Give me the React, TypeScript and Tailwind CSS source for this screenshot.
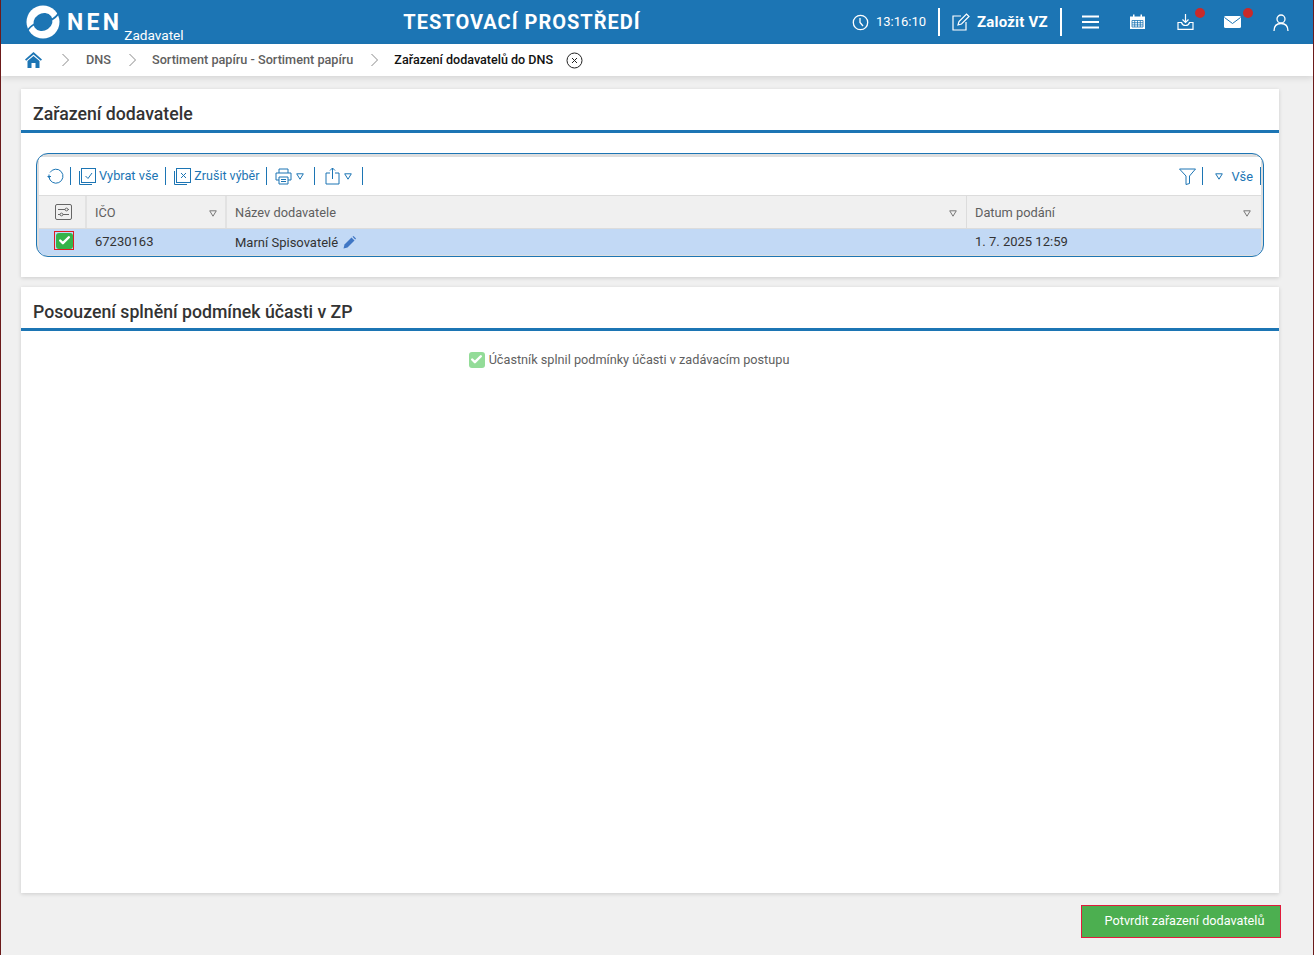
import React from "react";
import { Check } from "lucide-react";

const blue = "#1c75b4";

const Sep = () => <span className="block w-px h-[18px] bg-[#1c75b4] shrink-0" />;

const Tri = ({ color = blue }: { color?: string }) => (
  <svg width="8" height="7" viewBox="0 0 8 7" fill="none" className="shrink-0 block">
    <path d="M0.7 0.8H7.3L4 6.2Z" stroke={color} strokeWidth="1" strokeLinejoin="round" />
  </svg>
);

const Chevron = () => (
  <svg width="9" height="14" viewBox="0 0 9 14" fill="none" className="shrink-0 block">
    <path d="M1.5 1L7.5 7L1.5 13" stroke="#8a8a8a" strokeWidth="1" />
  </svg>
);

const Logo = () => (
  <svg width="34" height="34" viewBox="0 0 34 34" className="shrink-0">
    <circle cx="17" cy="17" r="16.5" fill="#fff" />
    <ellipse cx="17" cy="17" rx="10" ry="8.6" transform="rotate(-35 17 17)" fill={blue} />
    <path d="M25 15Q30 13 34 6" fill="none" stroke={blue} strokeWidth="1.8" />
    <path d="M9 19Q4 21 0 28" fill="none" stroke={blue} strokeWidth="1.8" />
  </svg>
);

const SelectIcon = ({ kind }: { kind: "check" | "x" }) => (
  <svg width="17" height="17" viewBox="0 0 17 17" fill="none" stroke={blue} strokeWidth="1" className="shrink-0 block">
    <path d="M0.5 3V16.5H13" />
    <rect x="2.5" y="0.5" width="14" height="14" />
    {kind === "check" ? <path d="M6.5 8L9 10.5L13 5" /> : <path d="M7 5L12 10M12 5L7 10" />}
  </svg>
);

const Panel = ({ title, className, children }: { title: string; className: string; children: React.ReactNode }) => (
  <section className={`bg-white shadow-[0_1px_4px_rgba(0,0,0,0.15)] ${className}`}>
    <h2 className="h-[44px] border-b-[3px] border-[#1c75b4] px-3 pt-[13px] text-[17.7px] leading-[24px] font-medium text-[#333]">
      {title}
    </h2>
    {children}
  </section>
);

export default function App() {
  return (
    <div
      className="w-[1314px] h-[955px] bg-[#f0f0f0] border-x border-[#6b1a1a] flex flex-col overflow-hidden text-[12.8px] text-[#5f5f5f]"
      style={{ fontFamily: "Roboto, sans-serif" }}
    >
      {/* top bar */}
      <header className="h-[44px] bg-[#1c75b4] flex items-center text-white shrink-0">
        <div className="w-[400px] flex items-center pl-[25px] shrink-0">
          <Logo />
          <span className="ml-[7px] text-[23px] font-bold tracking-[3.3px] leading-none">NEN</span>
          <span className="ml-[2px] mt-[28px] text-[13.6px] leading-none">Zadavatel</span>
        </div>
        <div className="w-[240px] text-center text-[20px] font-bold tracking-[1px] shrink-0 ml-[1px]">
          TESTOVACÍ PROSTŘEDÍ
        </div>
        <div className="flex items-center ml-[210px]">
          <svg width="17" height="17" viewBox="0 0 17 17" fill="none" stroke="#fff" strokeWidth="1.3">
            <circle cx="8.5" cy="8.5" r="7.2" />
            <path d="M8 4V8.5L11 12" />
          </svg>
          <span className="ml-[7px] w-[52px] text-[13px]">13:16:10</span>
          <span className="ml-[10px] w-[2px] h-[28px] bg-white" />
          <svg width="18" height="18" viewBox="0 0 18 18" fill="none" stroke="#fff" strokeWidth="1.2" className="ml-[12px]">
            <path d="M9 3H1V17H14V9" />
            <path d="M6 12L7 8.5L14.5 1L17 3.5L9.5 11Z" />
          </svg>
          <span className="ml-[7px] w-[83px] text-[15px] font-bold tracking-[0.2px]">Založit VZ</span>
          <span className="w-[2px] h-[28px] bg-white" />
          <svg width="17" height="14" viewBox="0 0 17 14" fill="#fff" className="ml-[20px]">
            <rect y="0.5" width="17" height="2" />
            <rect y="6" width="17" height="2" />
            <rect y="11.5" width="17" height="2" />
          </svg>
          <svg width="17" height="16" viewBox="0 0 17 16" className="ml-[30px]">
            <path d="M1 2.5H16V15H1Z" fill="#fff" />
            <rect x="4" y="0.5" width="1.5" height="3.5" fill="#fff" />
            <rect x="11.5" y="0.5" width="1.5" height="3.5" fill="#fff" />
            <path d="M3 6.5H14V13H3ZM5.7 6.5V13M8.5 6.5V13M11.3 6.5V13M3 8.7H14M3 10.9H14" fill="none" stroke={blue} strokeWidth="0.8" />
          </svg>
          <span className="relative ml-[31px] w-[17px] h-[16px]">
            <svg width="17" height="16" viewBox="0 0 17 16" fill="none" stroke="#fff" strokeWidth="1.2" className="block">
              <path d="M8.5 0V8M5.5 5.5L8.5 8.5L11.5 5.5" />
              <path d="M4.5 8.5H1V15.3H16V8.5H12.5C12 10.5 10.5 11.5 8.5 11.5C6.5 11.5 5 10.5 4.5 8.5Z" />
            </svg>
            <span className="absolute -top-[6px] left-[18px] w-[10px] h-[10px] rounded-full bg-[#c92a2a]" />
          </span>
          <span className="relative ml-[30px] w-[17px] h-[12px]">
            <svg width="17" height="12" viewBox="0 0 17 12" className="block">
              <rect width="17" height="12" rx="1.5" fill="#fff" />
              <path d="M0.5 1.5L8.5 7.5L16.5 1.5" fill="none" stroke={blue} strokeWidth="1" />
            </svg>
            <span className="absolute -top-[8px] left-[19px] w-[10px] h-[10px] rounded-full bg-[#c92a2a]" />
          </span>
          <svg width="16" height="17" viewBox="0 0 16 17" fill="none" stroke="#fff" strokeWidth="1.3" className="ml-[32px]">
            <circle cx="8" cy="5" r="4" />
            <path d="M1 17C1 12 4 9.5 8 9.5C12 9.5 15 12 15 17" />
          </svg>
        </div>
      </header>

      {/* breadcrumb */}
      <nav className="h-[32px] bg-white shadow-[0_2px_6px_rgba(0,0,0,0.12)] flex items-center pl-[24px] shrink-0 text-[12.7px] font-medium relative">
        <svg width="17" height="16" viewBox="0 0 17 16" fill={blue} className="shrink-0">
          <path d="M8.5 0L17 7.5L15.8 8.7L8.5 2.4L1.2 8.7L0 7.5Z" />
          <path d="M8.5 4L14.5 9V16H10.5V11H6.5V16H2.5V9Z" />
        </svg>
        <span className="ml-[19px]"><Chevron /></span>
        <span className="ml-[16px]">DNS</span>
        <span className="ml-[17px]"><Chevron /></span>
        <span className="ml-[15px]">Sortiment papíru - Sortiment papíru</span>
        <span className="ml-[17px]"><Chevron /></span>
        <span className="ml-[15px] text-[12.55px] text-[#111]">Zařazení dodavatelů do DNS</span>
        <svg width="17" height="17" viewBox="0 0 17 17" fill="none" stroke="#222" strokeWidth="1" className="ml-[13px]">
          <circle cx="8.5" cy="8.5" r="7.5" />
          <path d="M6 6L11 11M11 6L6 11" />
        </svg>
      </nav>

      <main className="flex-1 flex flex-col pl-[20px] pr-[34px] pt-[13px]">
        <Panel title="Zařazení dodavatele" className="h-[188px]">
          <div className="mx-[15px] mt-[20px] h-[104px] rounded-[12px] border border-[#1c75b4] overflow-hidden bg-[#dedede] pt-[3px] px-[2px] pb-[2px]">
            <div className="h-[38px] bg-white flex items-center pl-[8px] text-[#1c75b4]">
              <svg width="17" height="17" viewBox="0 0 17 17" fill="none" stroke={blue} strokeWidth="1" className="shrink-0">
                <path d="M3 4.5A7 7 0 1 1 2 9" />
                <path d="M0.5 8.5H4M2 6.5V10" />
              </svg>
              <span className="ml-[6px] mr-[8px]"><Sep /></span>
              <SelectIcon kind="check" />
              <span className="ml-[3px] mr-[7px]">Vybrat vše</span>
              <Sep />
              <span className="ml-[8px]"><SelectIcon kind="x" /></span>
              <span className="ml-[3px] mr-[7px] text-[12.5px]">Zrušit výběr</span>
              <Sep />
              <svg width="17" height="17" viewBox="0 0 17 17" fill="none" stroke={blue} strokeWidth="1" className="ml-[8px] shrink-0">
                <path d="M4 5V1H13V5M4 12H1V5H16V12H13" />
                <path d="M4 9H13V16H4ZM6 11.5H11M6 13.5H11" />
              </svg>
              <span className="ml-[4px] mr-[10px]"><Tri /></span>
              <Sep />
              <svg width="15" height="18" viewBox="0 0 15 18" fill="none" stroke={blue} strokeWidth="1" className="ml-[10px] shrink-0">
                <path d="M5 6H1V17H14V6H10M7.5 12V1M5 3.5L7.5 1L10 3.5" />
              </svg>
              <span className="ml-[4px] mr-[10px]"><Tri /></span>
              <Sep />
              <div className="ml-auto flex items-center">
                <svg width="17" height="17" viewBox="0 0 17 17" fill="none" stroke={blue} strokeWidth="1" className="shrink-0">
                  <path d="M0.5 1H16.5L10.5 8V15.5L7 16.5V8Z" />
                </svg>
                <span className="ml-[6px]"><Sep /></span>
                <span className="ml-[12px]"><Tri /></span>
                <span className="ml-[8px] mt-[1px]">Vše</span>
                <span className="ml-[7px]"><Sep /></span>
              </div>
            </div>
            <div className="h-[34px] bg-[#f0f0f0] border-y border-[#dcdcdc] flex items-center">
              <div className="w-[48px] h-full flex items-center justify-center border-r-2 border-[#e2e2e2] pl-[3px]">
                <svg width="17" height="16" viewBox="0 0 17 16" fill="none" stroke="#666" strokeWidth="1">
                  <rect x="0.5" y="0.5" width="16" height="15" rx="1.5" />
                  <path d="M3 5.5H10M13 5.5H14M3 10.5H5M8 10.5H14" />
                  <circle cx="11.5" cy="5.5" r="1.4" />
                  <circle cx="6.5" cy="10.5" r="1.4" />
                </svg>
              </div>
              <div className="w-[140px] h-full flex items-center justify-between pl-[8px] pr-[8px] pt-[2px] border-r-2 border-[#e2e2e2]">
                <span>IČO</span>
                <Tri color="#777" />
              </div>
              <div className="w-[740px] h-full flex items-center justify-between pl-[8px] pr-[9px] pt-[2px] border-r border-[#dcdcdc]">
                <span>Název dodavatele</span>
                <Tri color="#777" />
              </div>
              <div className="flex-1 h-full flex items-center justify-between pl-[8px] pr-[10px] pt-[2px]">
                <span>Datum podání</span>
                <Tri color="#777" />
              </div>
            </div>
            <div className="h-[26px] bg-[#c2d9f5] flex items-center text-[13px] text-[#333]">
              <div className="w-[48px] flex justify-center pb-[3px] pl-[2px]">
                <span className="w-[20px] h-[19px] border border-[#e01b24] flex items-center justify-center">
                  <span className="w-[17px] h-[16px] rounded-[3px] bg-[#35b34a] flex items-center justify-center">
                    <Check size={13} strokeWidth={4.5} color="#fff" />
                  </span>
                </span>
              </div>
              <div className="w-[140px] pl-[8px]">67230163</div>
              <div className="w-[740px] pl-[8px] flex items-center">
                <span className="mt-[1px]">Marní Spisovatelé</span>
                <svg width="13" height="13" viewBox="0 0 13 13" fill="#3f76c4" className="ml-[5px]">
                  <path d="M0.5 12.5L1.5 8.5L8.5 1.5L11.5 4.5L4.5 11.5Z" />
                  <path d="M9.5 0.8L10.5 0L13 2.5L12.2 3.5Z" />
                </svg>
              </div>
              <div className="flex-1 pl-[8px]">1. 7. 2025 12:59</div>
            </div>
          </div>
        </Panel>

        <Panel title="Posouzení splnění podmínek účasti v ZP" className="mt-[10px] h-[606px]">
          <div className="mt-[19px] flex items-center justify-center pr-[42px] text-[12.7px]">
            <span className="w-[16px] h-[16px] rounded-[3px] bg-[#93dc98] flex items-center justify-center">
              <Check size={13} strokeWidth={4.5} color="#fff" />
            </span>
            <span className="ml-[4px]">Účastník splnil podmínky účasti v zadávacím postupu</span>
          </div>
        </Panel>

        <div className="mt-[12px] flex justify-end -mr-[2px]">
          <button className="w-[200px] h-[33px] bg-[#4caf50] border border-[#e01b3c] text-white text-[12.7px] font-normal pb-[2px] pl-[7px]">
            Potvrdit zařazení dodavatelů
          </button>
        </div>
      </main>
    </div>
  );
}
